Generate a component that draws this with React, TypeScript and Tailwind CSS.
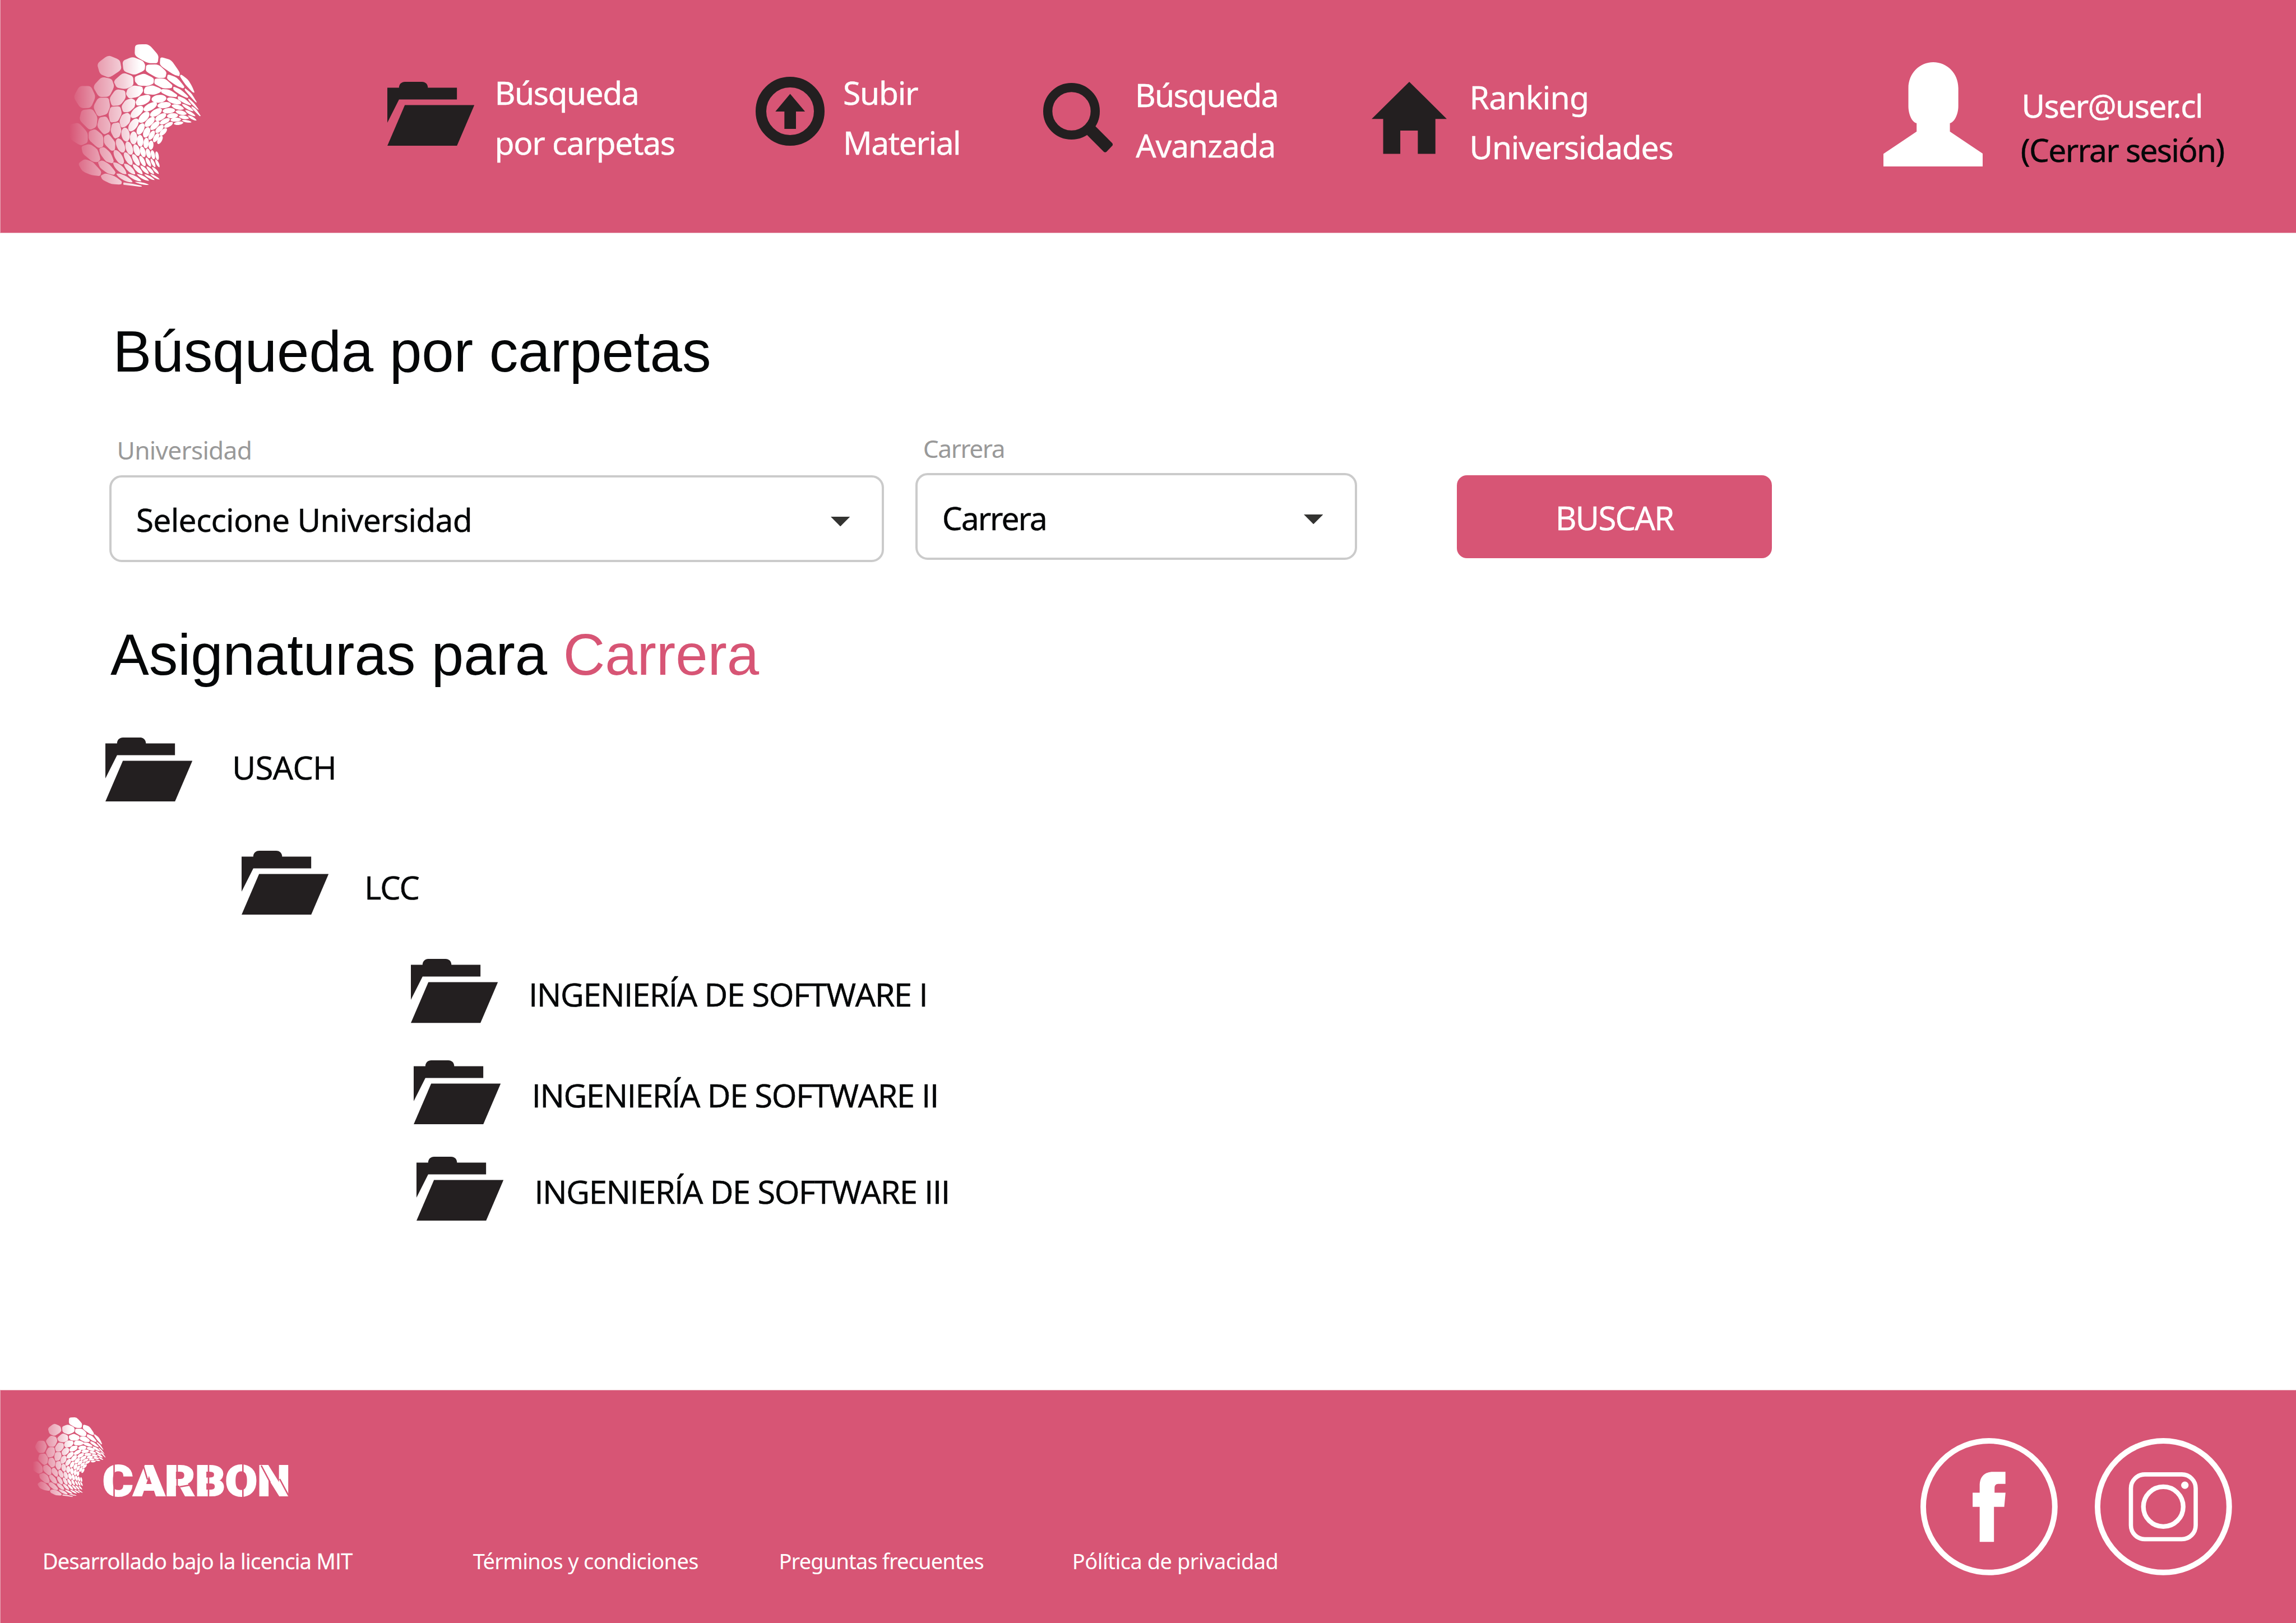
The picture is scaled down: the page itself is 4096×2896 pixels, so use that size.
import React from "react";

const noto = "font-['Noto_Sans',sans-serif]";
const open = "font-['Open_Sans','Noto_Sans',sans-serif] [-webkit-text-stroke:0.7px_currentColor]";
const arial = "font-['Liberation_Sans',Arial,sans-serif]";

/* ---------- honeycomb mark ---------- */

// Large cells: polygon corners, later rounded.
const polygons: number[][] = [
  [517, 107, 605, 105, 670, 178, 664, 229, 600, 229, 514, 180],
  [681, 187, 752, 208, 808, 290, 804, 314, 765, 302, 677, 242],
  [814, 300, 860, 335, 885, 375, 904, 420, 890, 418, 842, 366, 807, 314],
  [343, 176, 419, 208, 430, 270, 350, 324, 289, 299, 270, 232],
  [435, 213, 502, 187, 570, 215, 583, 240, 579, 275, 512, 306, 442, 280],
  [589, 238, 668, 236, 722, 285, 714, 324, 662, 325, 586, 282],
  [729, 299, 790, 322, 839, 383, 828, 393, 785, 375, 723, 330],
  [841, 390, 880, 422, 900, 453, 919, 484, 908, 481, 880, 450, 838, 402],
  [300, 317, 366, 330, 383, 380, 350, 446, 283, 448, 243, 380],
  [440, 289, 505, 314, 507, 372, 457, 397, 398, 388, 377, 345],
  [515, 316, 575, 294, 639, 326, 638, 360, 602, 377, 540, 374, 516, 348],
  [645, 328, 710, 328, 760, 370, 755, 391, 698, 393, 641, 362],
  [765, 379, 815, 400, 864, 446, 857, 455, 820, 440, 765, 402],
  [863, 455, 900, 488, 932, 533, 920, 527, 890, 500, 862, 467],
  [156, 377, 231, 377, 262, 446, 230, 519, 163, 521, 117, 448],
  [393, 397, 453, 405, 457, 455, 421, 502, 366, 506, 351, 455],
  [508, 372, 565, 381, 570, 412, 540, 447, 478, 458, 457, 430, 468, 395],
  [583, 383, 630, 371, 686, 394, 686, 416, 640, 434, 576, 427, 574, 403],
  [686, 396, 740, 400, 792, 434, 786, 449, 740, 445, 686, 420],
  [794, 440, 840, 458, 883, 498, 875, 502, 840, 491, 795, 464],
  [883, 506, 912, 525, 944, 571, 936, 572, 910, 547, 883, 517],
  [278, 452, 346, 452, 356, 510, 336, 560, 275, 575, 245, 512],
  [358, 511, 420, 507, 432, 555, 406, 607, 356, 614, 344, 560],
  [495, 456, 519, 470, 516, 512, 480, 545, 440, 547, 428, 508, 455, 468],
  [545, 443, 600, 432, 618, 443, 612, 475, 575, 499, 528, 504, 519, 480],
  [170, 532, 241, 525, 274, 578, 267, 642, 222, 663, 155, 597],
  [284, 580, 332, 573, 360, 624, 353, 674, 315, 693, 270, 640],
  [368, 620, 415, 611, 429, 665, 416, 707, 384, 719, 357, 670],
  [432, 563, 470, 548, 489, 568, 484, 612, 455, 641, 427, 647, 415, 605],
  [88, 628, 151, 613, 211, 680, 210, 744, 163, 764, 92, 718],
  [216, 671, 259, 655, 310, 698, 312, 770, 278, 780, 216, 725],
  [314, 703, 346, 687, 389, 740, 387, 792, 363, 798, 316, 750],
  [168, 768, 222, 751, 273, 785, 294, 852, 275, 871, 240, 867, 178, 816],
  [284, 781, 317, 771, 360, 812, 380, 862, 370, 879, 328, 867, 290, 815],
  [147, 880, 191, 849, 242, 868, 299, 930, 291, 961, 235, 955, 176, 930],
  [275, 868, 306, 858, 352, 885, 392, 935, 382, 953, 338, 944, 288, 905],
  [293, 958, 325, 942, 385, 960, 432, 995, 428, 1016, 365, 1013, 305, 985],
];

// Small cells: the two tips and the thickness.
const spindles: number[][] = [
  [624, 464, 720, 455, 49], [724, 459, 816, 488, 34], [820, 493, 896, 539, 20],
  [492, 580, 567, 511, 50], [573, 535, 658, 488, 42], [662, 506, 750, 495, 38],
  [753, 502, 834, 525, 28], [842, 533, 909, 572, 18], [480, 668, 534, 590, 48],
  [544, 612, 606, 547, 46], [615, 570, 690, 527, 39], [696, 540, 776, 534, 33],
  [779, 540, 852, 558, 26], [860, 568, 916, 600, 15], [448, 647, 463, 736, 51],
  [403, 717, 442, 807, 48], [508, 671, 507, 755, 45], [571, 619, 535, 691, 41],
  [642, 580, 583, 639, 40], [718, 559, 649, 598, 35], [796, 566, 724, 572, 31],
  [800, 573, 867, 586, 22], [820, 600, 883, 611, 14], [606, 645, 578, 710, 39],
  [674, 607, 618, 659, 34], [742, 590, 678, 621, 29], [815, 593, 747, 597, 24],
  [831, 614, 768, 622, 21], [641, 666, 608, 725, 30], [700, 631, 651, 679, 31],
  [762, 613, 705, 644, 26], [669, 684, 638, 740, 29], [722, 652, 677, 697, 28],
  [692, 700, 665, 752, 26], [548, 694, 553, 770, 39], [592, 712, 586, 781, 33],
  [622, 730, 619, 790, 30], [465, 737, 493, 822, 42], [515, 755, 540, 830, 37],
  [558, 769, 577, 838, 32], [595, 782, 611, 845, 28], [626, 793, 640, 852, 24],
  [655, 801, 665, 857, 20], [384, 793, 439, 883, 44], [449, 807, 496, 888, 36],
  [501, 819, 544, 893, 31], [548, 830, 582, 896, 27], [587, 840, 619, 900, 22],
  [619, 846, 648, 904, 19], [649, 852, 675, 904, 17], [375, 872, 461, 948, 38],
  [446, 880, 518, 949, 31], [502, 885, 566, 948, 26], [551, 892, 606, 947, 22],
  [591, 897, 640, 948, 20], [627, 901, 671, 947, 16], [396, 946, 501, 1000, 28],
  [469, 948, 558, 994, 22], [529, 948, 608, 991, 18], [577, 949, 644, 986, 14],
  [616, 948, 677, 983, 12], [517, 999, 606, 1017, 11],
];

function roundedPolygon(p: number[]) {
  const n = p.length / 2;
  const at = (i: number) => [p[((i + n) % n) * 2], p[((i + n) % n) * 2 + 1]];
  const mix = (a: number[], b: number[], t: number) =>
    `${(a[0] + (b[0] - a[0]) * t).toFixed(1)} ${(a[1] + (b[1] - a[1]) * t).toFixed(1)}`;
  let d = "";
  for (let i = 0; i < n; i++) {
    const v = at(i);
    d += `${i ? "L" : "M"}${mix(v, at(i - 1), 0.28)}Q${v[0]} ${v[1]} ${mix(v, at(i + 1), 0.28)}`;
  }
  return d + "Z";
}

function spindle([x1, y1, x2, y2, w]: number[]) {
  const dx = x2 - x1;
  const dy = y2 - y1;
  const len = Math.hypot(dx, dy);
  const a = w / len < 0.35 ? 0.18 : 0.04;
  const nx = (-dy / len) * w * 0.7;
  const ny = (dx / len) * w * 0.7;
  const c = (t: number, s: number) =>
    `${(x1 + dx * t + nx * s).toFixed(1)} ${(y1 + dy * t + ny * s).toFixed(1)}`;
  return `M${x1} ${y1}C${c(a, 1)} ${c(1 - a, 1)} ${x2} ${y2}C${c(1 - a, -1)} ${c(a, -1)} ${x1} ${y1}Z`;
}

const markPath =
  polygons.map(roundedPolygon).join("") +
  spindles.map(spindle).join("") +
  "M444 1002Q438 1006 442 1017Q500 1022 558 1031Q565 1028 556 1023Q500 1009 444 1002Z";

function Mark({ id, className }: { id: string; className: string }) {
  return (
    <svg viewBox="92 106 850 924" className={className}>
      <defs>
        <linearGradient id={id} gradientUnits="userSpaceOnUse" x1="92" y1="0" x2="552" y2="0">
          <stop offset="0" stopColor="#fff" stopOpacity="0" />
          <stop offset="0.15" stopColor="#fff" stopOpacity="0.16" />
          <stop offset="0.4" stopColor="#fff" stopOpacity="0.42" />
          <stop offset="0.62" stopColor="#fff" stopOpacity="0.61" />
          <stop offset="0.76" stopColor="#fff" stopOpacity="0.73" />
          <stop offset="0.9" stopColor="#fff" stopOpacity="0.9" />
          <stop offset="1" stopColor="#fff" />
        </linearGradient>
      </defs>
      <path d={markPath} fill={`url(#${id})`} />
    </svg>
  );
}

/* ---------- icons ---------- */

function FolderIcon({ className = "" }: { className?: string }) {
  return (
    <svg viewBox="0 0 188 138.3" className={`h-[114.2px] w-[155.2px] shrink-0 fill-[#231f20] ${className}`}>
      <path d="M0 12.7H25.2C25.2 5 31 0 38 0H75C82 0 87.6 5 87.6 12.7H150.4V38H25.3L0 88.3Z" />
      <path d="M37.8 50.4H188L150.4 138.3H0Z" />
    </svg>
  );
}

function UploadIcon() {
  return (
    <svg viewBox="0 0 149 149" className="mt-[137px] h-[123px] w-[123px] shrink-0 fill-[#231f20]">
      <circle cx="74.5" cy="74.5" r="63" fill="none" stroke="#231f20" strokeWidth="23" />
      <path d="M74.6 37L106.8 75H87.2V112.8H62.2V75H42.7Z" />
    </svg>
  );
}

function SearchIcon() {
  return (
    <svg viewBox="0 0 150.7 150.7" className="mt-[147.8px] h-[124.4px] w-[124.4px] shrink-0 fill-[#231f20]">
      <circle cx="61.2" cy="61.2" r="51.3" fill="none" stroke="#231f20" strokeWidth="19.8" />
      <path d="M112.9 93.7L148.8 129.6Q152 133 148.8 136.4L137.3 148.4Q134 151.6 130.6 148.4L94.7 112.3L100 98Z" />
    </svg>
  );
}

function HomeIcon() {
  return (
    <svg viewBox="0 0 162.6 155.7" className="mt-[146.1px] h-[128.5px] w-[134.2px] shrink-0 fill-[#231f20]">
      <path d="M81.3 0L162.6 80.4H137.8V155.7H99.8V105.4H61.9V155.7H24.9V80.4H0Z" />
    </svg>
  );
}

function UserIcon() {
  return (
    <svg viewBox="0 0 215.2 225.4" className="mt-[110.6px] h-[186.1px] w-[177.7px] shrink-0 fill-white">
      <path d="M53.9 56C53.9 24 78 0 107.7 0S161.8 24 161.8 56V95C161.8 114 152 130.5 143.6 131.7V150L215.2 198V225.4H0V198L71.7 150V131.7C63 130.5 53.9 114 53.9 95Z" />
    </svg>
  );
}

function FacebookIcon() {
  return (
    <svg viewBox="0 0 296.5 296.5" className="size-[244.8px] fill-white">
      <circle cx="148.25" cy="148.25" r="142.2" fill="none" stroke="#fff" strokeWidth="12" />
      <path d="M183.7 73V99H168Q160.2 99.5 160.2 107.5V118H183.9L181.1 148.7H158.9V224.4H128V148.7H112.8V118H128V103C128 84 138 73 157 73Z" />
    </svg>
  );
}

function InstagramIcon() {
  return (
    <svg viewBox="0 0 296.5 296.5" className="size-[244.8px]" fill="none" stroke="#fff">
      <circle cx="148.25" cy="148.25" r="142.2" strokeWidth="12" />
      <rect x="78.1" y="78.6" width="140" height="140" rx="30" strokeWidth="9.2" />
      <circle cx="148.1" cy="148.3" r="43" strokeWidth="10" />
      <circle cx="194.7" cy="101.9" r="8" fill="#fff" stroke="none" />
    </svg>
  );
}

/* ---------- sections ---------- */

function Header() {
  return (
    <header
      className={`${noto} grid h-[416px] grid-cols-[689.5px_657px_513.1px_586px_913px_1fr] items-start border-b border-l border-[#e8a9b8] bg-[#d75575] text-[57px] leading-[89.4px] whitespace-nowrap text-white [-webkit-text-stroke:0.4px_currentColor]`}
    >
      <Mark id="mark-header" className="mt-[78.7px] ml-[123.4px] h-[254.3px] w-[233.9px]" />

      <a className="flex items-start">
        <FolderIcon className="mt-[146.1px]" />
        <span className="mt-[120.8px] ml-[36.9px]">
          <span className="block tracking-[-1.57px]">Búsqueda</span>
          <span className="block tracking-[-1.4px]">por carpetas</span>
        </span>
      </a>

      <a className="flex items-start">
        <UploadIcon />
        <span className="mt-[120.8px] ml-[33.5px]">
          <span className="block tracking-[-1.3px]">Subir</span>
          <span className="block tracking-[-1.5px]">Material</span>
        </span>
      </a>

      <a className="flex items-start">
        <SearchIcon />
        <span className="mt-[125.4px] ml-[39.7px]">
          <span className="block tracking-[-1.72px]">Búsqueda</span>
          <span className="ml-[1.5px] block tracking-[-1.15px]">Avanzada</span>
        </span>
      </a>

      <a className="flex items-start">
        <HomeIcon />
        <span className="mt-[128.6px] ml-[40.8px]">
          <span className="block tracking-[-0.77px]">Ranking</span>
          <span className="block tracking-[-1.3px]">Universidades</span>
        </span>
      </a>

      <div className="flex items-start">
        <UserIcon />
        <span className="mt-[148.8px] ml-[67.5px] leading-[79.3px]">
          <span className="ml-[1.7px] block tracking-[-1.65px]">User@user.cl</span>
          <a className="block tracking-[-1.8px] text-[#050708]">(Cerrar sesión)</a>
        </span>
      </div>
    </header>
  );
}

function Caret({ className }: { className: string }) {
  return (
    <svg viewBox="0 0 34 17" className={`h-[17.4px] w-[34.4px] fill-[#333331] ${className}`}>
      <path d="M0 0H34L17 17Z" />
    </svg>
  );
}

function SearchForm() {
  return (
    <div className="mt-[81.8px] ml-[194.5px] flex h-[233.1px] items-start">
      <div className="mt-[3.5px] w-[1382.8px]">
        <label className={`${noto} ml-[14px] block text-[44.3px] leading-[60px] tracking-[-0.75px] text-[#999]`}>Universidad</label>
        <div className="mt-[14.6px] flex h-[155px] items-center justify-between rounded-[22px] border-4 border-[#cbcbcb] pr-[56.6px] pl-[44.3px]">
          <span className={`${noto} pt-[4px] text-[57px] leading-[80px] tracking-[-0.8px] [-webkit-text-stroke:0.4px_currentColor]`}>Seleccione Universidad</span>
          <Caret className="mt-[10px]" />
        </div>
      </div>

      <div className="ml-[55.6px] w-[787.8px]">
        <label className={`${noto} ml-[13.9px] block text-[44.3px] leading-[60px] tracking-[-1.5px] text-[#999]`}>Carrera</label>
        <div className="mt-[14.6px] flex h-[155px] items-center justify-between rounded-[22px] border-4 border-[#cbcbcb] pr-[56.3px] pl-[43.9px]">
          <span className={`${noto} pt-[3.6px] text-[57px] leading-[80px] tracking-[-2.07px] [-webkit-text-stroke:0.4px_currentColor]`}>Carrera</span>
          <Caret className="mt-[8.6px]" />
        </div>
      </div>

      <button
        className={`${open} mt-[78px] ml-[177.9px] flex h-[148.6px] w-[562.3px] items-center justify-center rounded-[18px] bg-[#d75575] pt-[3.8px] pl-[1px] text-[58px] leading-[80px] tracking-[-1.7px] text-white`}
      >
        BUSCAR
      </button>
    </div>
  );
}

const tree = [
  { name: "USACH", row: "mt-[87px] ml-[187.7px]", label: "mt-[7.7px] ml-[71.4px] tracking-[-0.5px]" },
  { name: "LCC", row: "mt-[87.8px] ml-[431px]", label: "mt-[19.6px] ml-[64.1px] tracking-[-2px]" },
  { name: "INGENIERÍA DE SOFTWARE I", row: "mt-[79px] ml-[732.6px]", label: "mt-[17.7px] ml-[55.4px] tracking-[-1.26px]" },
  { name: "INGENIERÍA DE SOFTWARE II", row: "mt-[66.6px] ml-[738px]", label: "mt-[17px] ml-[55.5px] tracking-[-1.29px]" },
  { name: "INGENIERÍA DE SOFTWARE III", row: "mt-[57.3px] ml-[742.8px]", label: "mt-[17.7px] ml-[55.5px] tracking-[-1.28px]" },
];

function FolderTree() {
  return (
    <ul className={`${open} text-[57.5px] leading-[90px] whitespace-nowrap`}>
      {tree.map((node) => (
        <li key={node.name} className={`flex h-[114.2px] items-start ${node.row}`}>
          <FolderIcon />
          <span className={node.label}>{node.name}</span>
        </li>
      ))}
    </ul>
  );
}

function Wordmark() {
  return (
    <div className="relative mt-[86.5px] ml-[-5.8px]">
      <span className="block origin-left scale-x-110 font-['Roboto',sans-serif] text-[75.5px] leading-[54px] font-black [-webkit-text-stroke:2px_white]">
        CARBON
      </span>
      {/* stencil cuts */}
      <svg
        viewBox="0 0 328.9 56"
        className="absolute top-[-1px] left-[2.5px] h-[56px] w-[328.9px] overflow-visible"
        fill="none"
        stroke="#d75575"
        strokeWidth="2.6"
      >
        <path d="M18.5 -2V58M70 -2L78 25M131 -2V58M136 38L153 35M187 -2V58M248.3 -2V58M281 0L297 30M314 24L330 54" />
      </svg>
    </div>
  );
}

function Footer() {
  return (
    <footer className="flex h-[416px] items-start justify-between border-t border-l border-[#e8a9b8] bg-[#d75575] text-white">
      <div className="w-[2600px] pt-[48.1px]">
        <div className="flex h-[142px] items-start pl-[57.4px]">
          <Mark id="mark-footer" className="h-[142px] w-[130.3px] shrink-0" />
          <Wordmark />
        </div>
        <nav className={`${noto} mt-[88.8px] grid grid-cols-[767.8px_545.8px_523.2px_1fr] pl-[74.9px] text-[38px] leading-[50px] whitespace-nowrap`}>
          <a className="font-['Open_Sans','Noto_Sans',sans-serif] tracking-[-0.59px] [-webkit-text-stroke:0.4px_currentColor]">
            Desarrollado bajo la licencia MIT
          </a>
          <a className="tracking-[-0.67px]">Términos y condiciones</a>
          <a className="tracking-[-0.85px]">Preguntas frecuentes</a>
          <a className="tracking-[-0.5px]">Pólítica de privacidad</a>
        </nav>
      </div>
      <div className="mt-[85px] mr-[114.1px] flex gap-[66.4px]">
        <FacebookIcon />
        <InstagramIcon />
      </div>
    </footer>
  );
}

export default function App() {
  return (
    <div className="flex h-[2896px] w-[4096px] flex-col overflow-hidden bg-white text-[#050708]">
      <Header />
      <main className="h-[2064px]">
        <h1 className={`${arial} mt-[152.1px] ml-[201.5px] text-[103.2px] leading-[120px]`}>Búsqueda por carpetas</h1>
        <SearchForm />
        <h2 className={`${arial} mt-[106.3px] ml-[197px] text-[103.2px] leading-[120px] tracking-[-0.06px]`}>
          Asignaturas para <span className="text-[#d75575]">Carrera</span>
        </h2>
        <FolderTree />
      </main>
      <Footer />
    </div>
  );
}
